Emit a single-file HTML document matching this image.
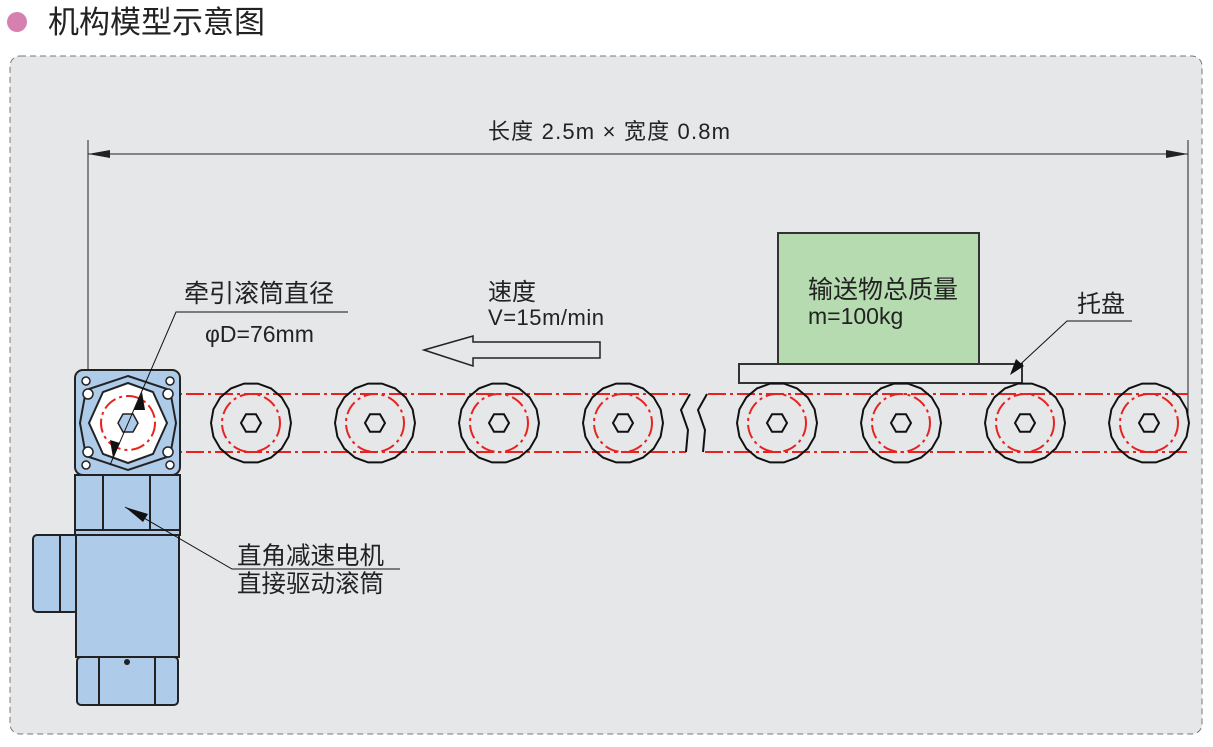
<!DOCTYPE html>
<html><head><meta charset="utf-8"><style>
html,body{margin:0;padding:0;background:#fff;}
svg{display:block;}
text{font-family:"Liberation Sans","Noto Sans CJK SC",sans-serif;fill:#222;}
</style></head><body>
<svg width="1213" height="747" viewBox="0 0 1213 747" xmlns="http://www.w3.org/2000/svg">
<defs>
<g id="r" stroke="#111" stroke-width="2" fill="none"><polygon points="40,0 37.6,13.7 30.6,25.7 20,34.6 6.9,39.4 -6.9,39.4 -20,34.6 -30.6,25.7 -37.6,13.7 -40,0 -37.6,-13.7 -30.6,-25.7 -20,-34.6 -6.9,-39.4 6.9,-39.4 20,-34.6 30.6,-25.7 37.6,-13.7"/><polygon points="10,0 5,8.7 -5,8.7 -10,0 -5,-8.7 5,-8.7"/><circle r="29" stroke="#e8231f" stroke-dasharray="14,4,3,4"/></g>
</defs>
<circle cx="17" cy="22" r="10" fill="#d680b0"/>
<text x="48" y="33" font-size="31" fill="#222">机构模型示意图</text>
<rect x="10" y="56" width="1192" height="678" rx="10" fill="#e6e7e9" stroke="#777" stroke-dasharray="6,4" stroke-width="1"/>
<line x1="88" y1="140" x2="88" y2="372" stroke="#222" stroke-width="1"/>
<line x1="1188" y1="140" x2="1188" y2="420" stroke="#222" stroke-width="1"/>
<line x1="88" y1="154" x2="1188" y2="154" stroke="#222" stroke-width="1"/>
<polygon points="88,154 110,150 110,158" fill="#222"/>
<polygon points="1188,154 1166,150 1166,158" fill="#222"/>
<text x="488" y="139" font-size="22" textLength="242">长度 2.5m × 宽度 0.8m</text>
<g stroke="#e8231f" stroke-width="2" fill="none" stroke-dasharray="18,4,3,4">
<line x1="128" y1="394" x2="688" y2="394"/><line x1="128" y1="452" x2="686" y2="452"/>
<line x1="708" y1="394" x2="1188" y2="394"/><line x1="705" y1="452" x2="1188" y2="452"/>
</g>
<path d="M690,394 L681,410 L688,430 L686,452 M707,394 L698,410 L705,430 L703,452" stroke="#111" stroke-width="2" fill="none"/>
<rect x="778" y="233" width="201" height="131" fill="#b6dbb0" stroke="#333" stroke-width="2"/>
<rect x="739" y="364" width="283" height="19" fill="#e6e7e9" stroke="#333" stroke-width="2"/>
<text x="808" y="298" font-size="25">输送物总质量</text>
<text x="808" y="324" font-size="23">m=100kg</text>
<path d="M1012,372 L1067,321 L1132,321" stroke="#111" stroke-width="1" fill="none"/>
<polygon points="1010,375 1016,359 1024,366" fill="#111"/>
<text x="1077" y="312" font-size="24">托盘</text>
<use href="#r" x="251" y="423"/><use href="#r" x="375" y="423"/><use href="#r" x="499" y="423"/><use href="#r" x="623" y="423"/>
<use href="#r" x="777" y="423"/><use href="#r" x="901" y="423"/><use href="#r" x="1025" y="423"/><use href="#r" x="1149" y="423"/>
<g stroke="#222" stroke-width="2" fill="#aecbea">
<rect x="33" y="535" width="45" height="77" rx="4"/>
<line x1="60" y1="535" x2="60" y2="612"/>
<rect x="75" y="370" width="105" height="105" rx="8"/>
<rect x="75" y="475" width="105" height="60"/>
<line x1="103" y1="475" x2="103" y2="530"/><line x1="150" y1="475" x2="150" y2="530"/>
<line x1="75" y1="530" x2="180" y2="530"/>
<rect x="76" y="535" width="103" height="122"/>
<rect x="77" y="657" width="101" height="48" rx="4"/>
<line x1="99" y1="657" x2="99" y2="705"/><line x1="155" y1="657" x2="155" y2="705"/>
<polygon points="128,376 170,390 176,423 170,456 128,470 86,456 80,423 86,390" fill="#aecbea"/>
</g>
<g fill="#fff" stroke="#222" stroke-width="1.5">
<circle cx="86" cy="381" r="4"/><circle cx="170" cy="381" r="4"/><circle cx="86" cy="465" r="4"/><circle cx="170" cy="465" r="4"/>
<circle cx="88" cy="394" r="5"/><circle cx="168" cy="394" r="5"/><circle cx="88" cy="452" r="5"/><circle cx="168" cy="452" r="5"/>
</g>
<polygon points="128,383 153,392 167,423 153,454 128,463 103,454 89,423 103,392" fill="#fff" stroke="#222" stroke-width="2"/>
<circle cx="128" cy="423" r="27" fill="none" stroke="#e8231f" stroke-width="2" stroke-dasharray="14,4,3,4"/>
<polygon points="138,423 133,432 123,432 118,423 123,414 133,414" fill="#aecbea" stroke="#222" stroke-width="1.5"/>
<circle cx="127" cy="662" r="3" fill="#222"/>
<path d="M348,312 L176,312 L110,465" stroke="#111" stroke-width="1" fill="none"/>
<polygon points="142,392 134,410 145,410" fill="#111"/>
<polygon points="113,458 110,440 120,443" fill="#111"/>
<text x="184" y="302" font-size="25">牵引滚筒直径</text>
<text x="205" y="342" font-size="23">φD=76mm</text>
<text x="488" y="300" font-size="24">速度</text>
<text x="488" y="325" font-size="22" textLength="116">V=15m/min</text>
<polygon points="424,350 473,336 473,342 600,342 600,358 473,358 473,366" fill="#e6e7e9" stroke="#222" stroke-width="1.5"/>
<path d="M125,507 L232,569 L400,569" stroke="#111" stroke-width="1" fill="none"/>
<polygon points="125,507 148,514 143,522" fill="#111"/>
<text x="237" y="564" font-size="24.5">直角减速电机</text>
<text x="237" y="592" font-size="24.5">直接驱动滚筒</text>
</svg>
</body></html>
